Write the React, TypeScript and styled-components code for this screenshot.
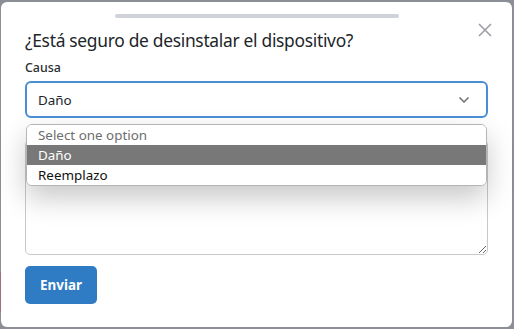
import React from "react";
import styled, { createGlobalStyle } from "styled-components";

const Global = createGlobalStyle`
  html, body { margin: 0; padding: 0; }
  body {
    background: #8b8e95;
    font-family: "Noto Sans", "Open Sans", sans-serif;
    width: 514px;
    height: 329px;
    overflow: hidden;
  }
`;

const Page = styled.div`
  position: relative;
  width: 514px;
  height: 329px;
  padding: 2px 2px 2px 1px;
  box-sizing: border-box;
  display: flex;
`;

const BackStrip = styled.div`
  position: absolute;
  left: 0;
  top: 272px;
  width: 1px;
  height: 40px;
  background: #a0707a;
`;

const Modal = styled.div`
  position: relative;
  flex: 1;
  background: #fff;
  border-radius: 6px;
  padding: 12px 24px 0 24px;
  box-sizing: border-box;
  display: flex;
  flex-direction: column;
`;

const Handle = styled.div`
  align-self: center;
  width: 284px;
  height: 4px;
  border-radius: 2px;
  background: #d0d3d9;
  margin-left: 1px;
`;

const Close = styled.button`
  position: absolute;
  top: 18px;
  right: 17px;
  width: 20px;
  height: 20px;
  padding: 0;
  border: 0;
  background: transparent;
  display: flex;
  align-items: center;
  justify-content: center;
`;

const Title = styled.h2`
  margin: 9px 0 0 0;
  font-size: 17.4px;
  font-weight: 400;
  letter-spacing: -0.3px;
  color: #212529;
  line-height: 26px;
`;

const Label = styled.label`
  margin-top: 6px;
  font-size: 12.4px;
  font-weight: 500;
  color: #2a2d31;
  line-height: 18px;
`;

const Field = styled.div`
  position: relative;
  margin-top: 4px;
`;

const SelectBox = styled.div`
  height: 37px;
  box-sizing: border-box;
  border: 2px solid #4a8fd6;
  border-radius: 6px;
  display: flex;
  align-items: center;
  justify-content: space-between;
  padding: 0 16px 0 11px;
  font-size: 13.4px;
  color: #212529;
`;

const Menu = styled.ul`
  position: absolute;
  top: 43px;
  left: 1px;
  right: 1px;
  margin: 0;
  padding: 0;
  list-style: none;
  background: #fff;
  border: 1px solid #b4b4b4;
  border-radius: 6px;
  overflow: hidden;
  z-index: 2;
  box-shadow: 0 12px 28px rgba(0, 0, 0, 0.22);
`;

const Option = styled.li<{ $active?: boolean; $muted?: boolean }>`
  height: 20px;
  line-height: 20px;
  padding: 0 11px;
  font-size: 13.4px;
  background: ${(p) => (p.$active ? "#787878" : "#fff")};
  color: ${(p) => (p.$active ? "#fff" : p.$muted ? "#6d6d6d" : "#111")};
`;

const TextArea = styled.textarea`
  display: block;
  margin-top: 22px;
  width: 100%;
  height: 115px;
  box-sizing: border-box;
  border: 1px solid #c9c9cd;
  border-radius: 5px;
  background: #fff;
  resize: vertical;
  font-family: inherit;
  outline: none;
`;

const Button = styled.button`
  align-self: flex-start;
  margin-top: 11px;
  width: 72px;
  height: 38px;
  border: 0;
  border-radius: 5px;
  background: #2f7bc4;
  color: #fff;
  font-family: inherit;
  font-size: 13.4px;
  font-weight: 700;
`;

export default function App() {
  return (
    <>
      <Global />
      <Page>
        <BackStrip />
        <Modal>
          <Handle />
          <Close aria-label="close">
            <svg width="14" height="14" viewBox="0 0 14 14">
              <path d="M1 1 L13 13 M13 1 L1 13" stroke="#9a9ca3" strokeWidth="1.5" fill="none" />
            </svg>
          </Close>
          <Title>¿Está seguro de desinstalar el dispositivo?</Title>
          <Label>Causa</Label>
          <Field>
            <SelectBox>
              <span>Daño</span>
              <svg width="12" height="8" viewBox="0 0 12 8">
                <path d="M1.5 1.5 L6 6 L10.5 1.5" stroke="#6b6e74" strokeWidth="1.5" fill="none" />
              </svg>
            </SelectBox>
            <Menu>
              <Option $muted>Select one option</Option>
              <Option $active>Daño</Option>
              <Option>Reemplazo</Option>
            </Menu>
            <TextArea />
          </Field>
          <Button>Enviar</Button>
        </Modal>
      </Page>
    </>
  );
}
